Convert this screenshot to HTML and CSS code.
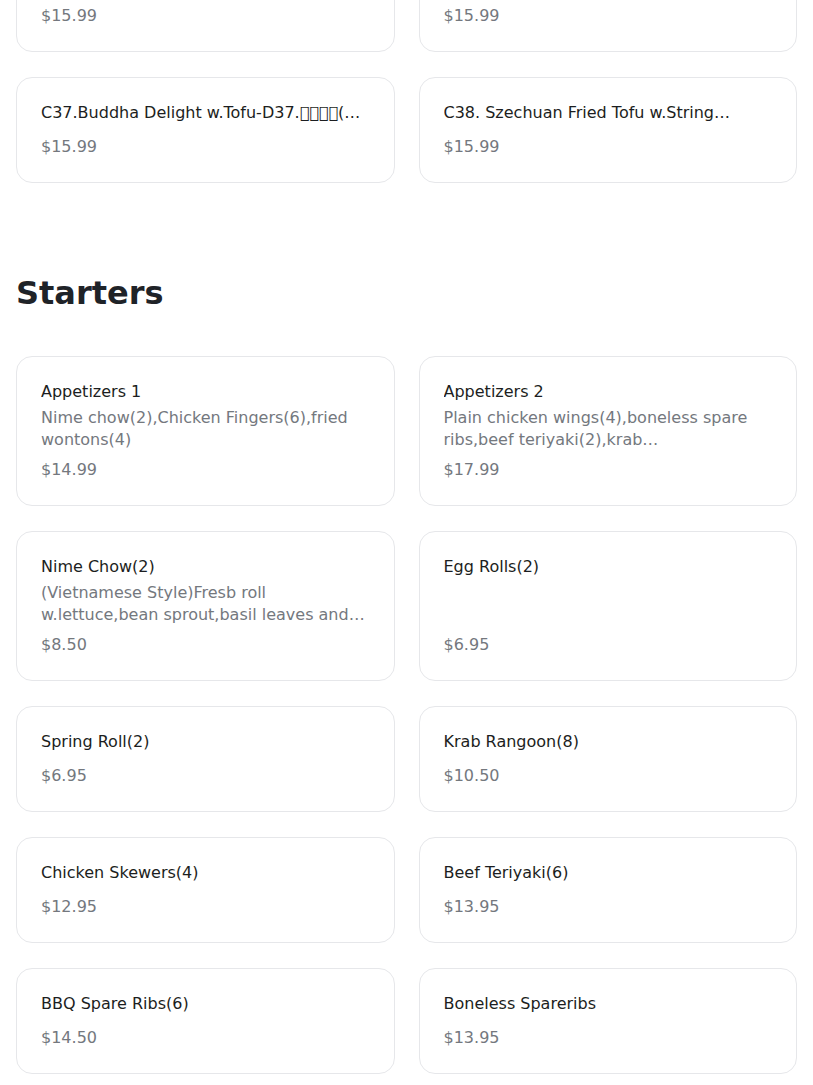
FILE: index.html
```html
<!DOCTYPE html>
<html lang="en">
<head>
<meta charset="utf-8">
<title>Menu</title>
<link rel="stylesheet" href="styles.css">
</head>
<body>
<main class="page">
  <section class="menu-section">
    <div class="grid">
      <div class="card">
        <div class="card-body">
          <div class="title">C35.Mixed Vegetables w.Tofu-D35.</div>
        </div>
        <div class="price">$15.99</div>
      </div>
      <div class="card">
        <div class="card-body">
          <div class="title">C36. Ma Po Tofu-D36.</div>
        </div>
        <div class="price">$15.99</div>
      </div>
      <div class="card">
        <div class="card-body">
          <div class="title">C37.Buddha Delight w.Tofu-D37.&#xE000;&#xE001;&#xE002;&#xE003;(…</div>
        </div>
        <div class="price">$15.99</div>
      </div>
      <div class="card">
        <div class="card-body">
          <div class="title">C38. Szechuan Fried Tofu w.String…</div>
        </div>
        <div class="price">$15.99</div>
      </div>
    </div>
  </section>

  <section class="menu-section">
    <h2 class="section-title">Starters</h2>
    <div class="grid">
      <div class="card">
        <div class="card-body">
          <div class="title">Appetizers 1</div>
          <div class="desc">Nime chow(2),Chicken Fingers(6),fried wontons(4)</div>
        </div>
        <div class="price">$14.99</div>
      </div>
      <div class="card">
        <div class="card-body">
          <div class="title">Appetizers 2</div>
          <div class="desc">Plain chicken wings(4),boneless spare ribs,beef teriyaki(2),krab…</div>
        </div>
        <div class="price">$17.99</div>
      </div>
      <div class="card">
        <div class="card-body">
          <div class="title">Nime Chow(2)</div>
          <div class="desc">(Vietnamese Style)Fresb roll w.lettuce,bean sprout,basil leaves and…</div>
        </div>
        <div class="price">$8.50</div>
      </div>
      <div class="card">
        <div class="card-body">
          <div class="title">Egg Rolls(2)</div>
        </div>
        <div class="price">$6.95</div>
      </div>
      <div class="card">
        <div class="card-body">
          <div class="title">Spring Roll(2)</div>
        </div>
        <div class="price">$6.95</div>
      </div>
      <div class="card">
        <div class="card-body">
          <div class="title">Krab Rangoon(8)</div>
        </div>
        <div class="price">$10.50</div>
      </div>
      <div class="card">
        <div class="card-body">
          <div class="title">Chicken Skewers(4)</div>
        </div>
        <div class="price">$12.95</div>
      </div>
      <div class="card">
        <div class="card-body">
          <div class="title">Beef Teriyaki(6)</div>
        </div>
        <div class="price">$13.95</div>
      </div>
      <div class="card">
        <div class="card-body">
          <div class="title">BBQ Spare Ribs(6)</div>
        </div>
        <div class="price">$14.50</div>
      </div>
      <div class="card">
        <div class="card-body">
          <div class="title">Boneless Spareribs</div>
        </div>
        <div class="price">$13.95</div>
      </div>
    </div>
  </section>
</main>
</body>
</html>
```

FILE: styles.css
```css
html, body {
  margin: 0;
  padding: 0;
  background: #ffffff;
}

body {
  font-family: "DejaVu Sans", sans-serif;
  font-size: 16px;
  color: #1f2328;
}

.page {
  padding: 0 16px;
  margin-top: -54px;
}

.menu-section + .menu-section {
  margin-top: 90px;
}

.section-title {
  margin: 0 0 43px;
  font-size: 32px;
  line-height: 40px;
  font-weight: 700;
  color: #1f2328;
}

.grid {
  display: grid;
  grid-template-columns: 1fr 1fr;
  column-gap: 24px;
  row-gap: 25px;
}

.card {
  display: flex;
  flex-direction: column;
  min-width: 0;
  padding: 23px 24px 23px;
  border: 1px solid #e6e7ea;
  border-radius: 16px;
  background: #ffffff;
}

.card-body {
  flex: 1 1 auto;
  min-width: 0;
}

.title {
  margin-bottom: 3px;
  font-size: 16px;
  line-height: 24px;
  color: #1c1e21;
  display: -webkit-box;
  -webkit-box-orient: vertical;
  -webkit-line-clamp: 1;
  overflow: hidden;
}

.desc {
  font-size: 16px;
  line-height: 22px;
  color: #74787e;
  display: -webkit-box;
  -webkit-box-orient: vertical;
  -webkit-line-clamp: 2;
  overflow: hidden;
}

.price {
  margin-top: 7px;
  font-size: 16px;
  line-height: 24px;
  color: #74787e;
}
```
